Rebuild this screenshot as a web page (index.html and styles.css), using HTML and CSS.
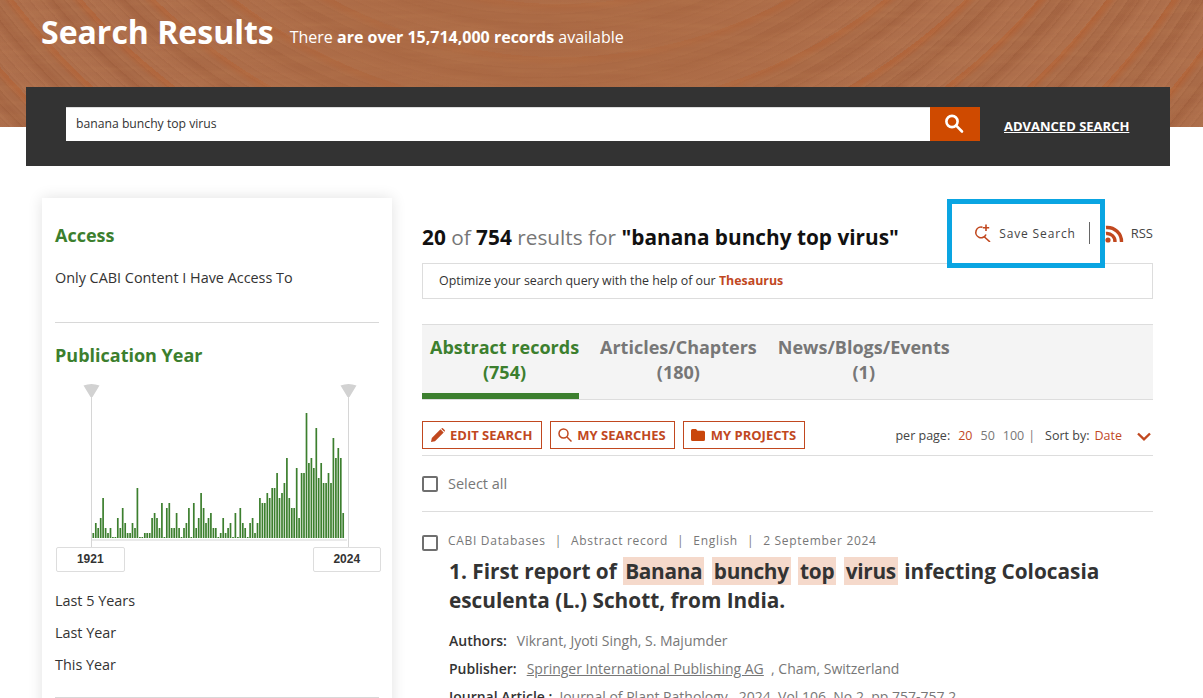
FILE: index.html
```html
<!DOCTYPE html>
<html lang="en">
<head>
<meta charset="utf-8">
<title>Search Results</title>
<link rel="stylesheet" href="styles.css">
</head>
<body>
<header class="hero">
  <svg class="grain" aria-hidden="true"><filter id="wood"><feTurbulence type="fractalNoise" baseFrequency="0.012 0.14" numOctaves="4" seed="7"/><feColorMatrix values="0 0 0 0 0.55  0 0 0 0 0.25  0 0 0 0 0.1  1.6 0 0 0 -0.62"/></filter><rect width="100%" height="100%" filter="url(#wood)"/></svg>
  <h1 class="hero-title">Search Results</h1>
  <p class="hero-sub">There <b>are over 15,714,000 records</b> available</p>
</header>
<section class="search-panel">
  <div class="search-box">
    <div class="search-input">banana bunchy top virus</div>
    <div class="search-btn"><svg width="20" height="20" viewBox="0 0 20 20" fill="none" stroke="#fff" stroke-width="2.6"><circle cx="7" cy="7.500" r="5.600"/><path d="M11.200 11.700 17 17.500" stroke-linecap="round"/></svg></div>
  </div>
  <a class="advanced">ADVANCED SEARCH</a>
</section>
<div class="content">
  <aside class="sidebar">
    <h2 class="side-title">Access</h2>
    <p class="side-item access-item">Only CABI Content I Have Access To</p>
    <hr class="side-rule">
    <h2 class="side-title pub">Publication Year</h2>
    <div class="chart">
      <svg width="325" height="167" viewBox="0 0 325 167" class="chart-svg">
        <path d="M36.5 10V167M293.5 10V167M36 160H292" stroke="#d6d6d6" stroke-width="1" fill="none"/>
        <path d="M28.5 5.500Q36.500 2.500 44.500 5.500L37.500 17H35.500ZM285.500 5.500Q293.500 2.500 301.500 5.500L294.500 17H292.500Z" fill="#d2d2d2"/>
        <path class="bars" d="M38.3 158V153M40.8 158V143M43.2 158V148M45.7 158V138M48.1 158V118M50.6 158V148M53 158V153M55.5 158V148M57.9 158V157M60.4 158V157M62.8 158V138M65.3 158V148M67.7 158V128M70.2 158V143M72.6 158V153M75.1 158V153M77.5 158V143M80 158V148M82.4 158V108M84.9 158V157M87.3 158V157M89.8 158V153M92.2 158V153M94.7 158V153M97.1 158V138M99.6 158V133M102 158V138M104.5 158V148M106.9 158V123M109.4 158V157M111.8 158V128M114.3 158V123M116.7 158V148M119.2 158V148M121.6 158V133M124.1 158V148M126.5 158V157M129 158V148M131.4 158V143M133.9 158V128M136.3 158V157M138.8 158V123M141.2 158V148M143.7 158V138M146.100 158V113M148.6 158V128M151 158V143M153.5 158V138M155.9 158V133M158.4 158V148M160.8 158V148M163.3 158V157M165.7 158V153M168.2 158V138M170.6 158V153M173.1 158V148M175.5 158V143M178 158V157M180.4 158V133M182.900 158V157M185.3 158V128M187.8 158V143M190.2 158V148M192.7 158V157M195.1 158V143M197.6 158V138M200 158V153M202.5 158V143M204.9 158V118M207.4 158V123M209.8 158V123M212.3 158V113M214.7 158V118M217.2 158V108M219.6 158V108M222.1 158V93M224.5 158V118M227 158V113M229.4 158V103M231.9 158V78M234.3 158V118M236.8 158V128M239.2 158V128M241.7 158V88M244.1 158V138M246.6 158V93M249 158V93M251.5 158V33M253.9 158V83M256.4 158V78M258.8 158V88M261.3 158V48M263.7 158V98M266.2 158V83M268.6 158V103M271.1 158V103M273.5 158V93M276 158V103M278.4 158V58M280.9 158V78M283.3 158V68M285.8 158V78M288.2 158V133"/>
      </svg>
      <div class="year-row"><span class="year">1921</span><span class="year">2024</span></div>
    </div>
    <ul class="range-list">
      <li class="side-item">Last 5 Years</li>
      <li class="side-item">Last Year</li>
      <li class="side-item">This Year</li>
    </ul>
    <hr class="side-rule bottom-rule">
  </aside>
  <main class="results">
    <div class="top-row">
      <h2 class="count"><b>20</b> of <b>754</b> results for <b>"banana bunchy top virus"</b></h2>
      <div class="top-tools">
        <a class="tool save"><svg width="17" height="18" viewBox="0 0 17 18" fill="none" stroke="#c1481f" stroke-width="1.6"><path d="M8.500 3.300A5.300 5.300 0 1 0 12 10.500"/><path d="M10.500 13 15.500 17.500" stroke-linecap="round"/><path d="M12 .5V7M8.800 3.700H15.200"/></svg><span class="save-label">Save Search</span></a>
        <span class="tool-sep"></span>
        <a class="tool rss"><svg width="20" height="19" viewBox="0 0 20 19" fill="none" stroke="#c1481f" stroke-width="3.400"><circle cx="3" cy="16" r="2.600" fill="#c1481f" stroke="none"/><path d="M1 9.500A8 8 0 0 1 10 18"/><path d="M1 3.500A14.200 14.200 0 0 1 16.500 18"/></svg><span class="rss-label">RSS</span></a>
      </div>
      <div class="callout"></div>
    </div>
    <div class="notice">Optimize your search query with the help of our <a class="link-strong">Thesaurus</a></div>
    <nav class="tabs">
      <a class="tab active">Abstract records<br>(754)</a>
      <a class="tab">Articles/Chapters<br>(180)</a>
      <a class="tab">News/Blogs/Events<br>(1)</a>
    </nav>
    <div class="actions">
      <a class="btn"><svg width="14" height="14" viewBox="0 0 14 14" fill="#c1481f"><path d="M0 14 .8 10 9.500 1.300 12.700 4.500 4 13.200ZM10.500.4Q11.300-.3 12.100.4L13.600 1.900Q14.300 2.700 13.600 3.500L13.400 3.800 10.200 .7Z"/></svg>EDIT SEARCH</a>
      <a class="btn btn-tight"><svg width="14" height="14" viewBox="0 0 14 14" fill="none" stroke="#c1481f" stroke-width="1.500"><circle cx="5.500" cy="5.500" r="4.500"/><path d="M9 9 13.500 13.500"/></svg>MY SEARCHES</a>
      <a class="btn btn-tight btn-folder"><svg width="14" height="12" viewBox="0 0 14 12" fill="#c9460b"><path d="M0 1.500Q0 0 1.500 0H5L6.500 1.700H12.500Q14 1.700 14 3.200V10.500Q14 12 12.500 12H1.500Q0 12 0 10.500Z"/></svg>MY PROJECTS</a>
      <div class="paging">
        <span>per page:</span><a class="accent">20</a><a class="muted">50</a><a class="muted">100</a><span class="bar">|</span><span>Sort by:</span><a class="accent date">Date</a>
        <svg class="chev" width="14" height="9" viewBox="0 0 14 9" fill="none" stroke="#c1481f" stroke-width="2.400"><path d="M1 1.500 7 7.300 13 1.500"/></svg>
      </div>
    </div>
    <label class="select-all"><span class="check"></span>Select all</label>
    <article class="record">
      <div class="record-meta"><span class="check"></span><span class="meta">CABI Databases</span><i>|</i><span class="meta">Abstract record</span><i>|</i><span class="meta">English</span><i>|</i><span class="meta">2 September 2024</span></div>
      <h3 class="record-title">1. First report of <mark>Banana</mark> <mark>bunchy</mark> <mark>top</mark> <mark>virus</mark> infecting Colocasia esculenta (L.) Schott, from India.</h3>
      <p class="field"><b>Authors:</b><span>Vikrant, Jyoti Singh, S. Majumder</span></p>
      <p class="field"><b>Publisher:</b><span><u>Springer International Publishing AG</u> &nbsp;, Cham, Switzerland</span></p>
      <p class="field field-tight"><b>Journal Article :</b><span>Journal of Plant Pathology , 2024, Vol.106, No.2, pp.757-757.2</span></p>
    </article>
  </main>
</div>
</body>
</html>
```
FILE: styles.css
```css
* { box-sizing: border-box; }
html, body { margin: 0; height: 698px; overflow: hidden; background: #fff; }
body { font-family: "Open Sans", sans-serif; color: #333; }
h1, h2, h3, p, ul { margin: 0; padding: 0; }
ul { list-style: none; }

.hero {
  position: relative;
  height: 127px;
  padding: 11px 41px 0;
  display: flex;
  align-items: flex-start;
  gap: 16px;
  color: #fff;
  overflow: hidden;
  background-color: #a96a47;
  background-image:
    linear-gradient(90deg, rgba(168,108,78,.1) 0 10%, rgba(172,106,68,.7) 32% 56%, rgba(172,110,74,.05) 76%),
    repeating-radial-gradient(circle at 560px -420px, rgba(190,90,36,.36) 0 3px, rgba(150,80,50,0) 9px 17px, rgba(140,70,40,.18) 21px 24px, rgba(195,130,95,.16) 33px 53px),
    repeating-radial-gradient(circle at 540px -400px, rgba(120,60,30,.1) 0 1px, rgba(0,0,0,0) 2px 6px, rgba(205,140,100,.1) 7px 9px);
}
.grain { position: absolute; inset: 0; width: 100%; height: 100%; opacity: .22; }
.hero-title { position: relative; font-size: 32px; font-weight: 700; line-height: 42px; }
.hero-sub { position: relative; margin-top: 15px; font-size: 16px; line-height: 22px; }

.search-panel {
  position: relative;
  margin: -40px 33px 0 26px;
  height: 79px;
  background: #333;
  padding: 20px 40px 0;
  display: flex;
  align-items: flex-start;
}
.search-box { display: flex; width: 914px; height: 34px; }
.search-input {
  flex: 1;
  background: #fff;
  border-top: 1px solid #ddd;
  padding: 0 10px;
  font-size: 12.2px;
  line-height: 32px;
  color: #333;
}
.search-btn { width: 50px; background: #cf4a00; display: flex; align-items: center; justify-content: center; }
.advanced { margin: 10px 0 0 24px; color: #fff; font-size: 13px; font-weight: 700; line-height: 18px; text-decoration: underline; }

.content { display: flex; align-items: flex-start; padding: 32px 50px 0 42px; gap: 30px; }
.sidebar { width: 350px; height: 520px; flex: none; padding: 25px 13px 0; background: #fff; box-shadow: 0 0 14px rgba(0,0,0,.12); }
.side-title { color: #3c7f2e; font-size: 18px; font-weight: 700; line-height: 24px; }
.side-item { font-size: 14.4px; line-height: 20px; color: #333; }
.access-item { margin-top: 21px; }
.side-rule { border: 0; border-top: 1px solid #d8d8d8; margin: 34px 0 0; }
.pub { margin-top: 20px; }
.chart { margin-top: 13px; }
.chart-svg { display: block; }
.bars { stroke: #3c7f2e; stroke-width: 1.7; fill: none; }
.year-row { display: flex; justify-content: space-between; margin-right: -2px; padding-left: 1px; }
.year {
  width: 68.5px; height: 25px;
  border: 1px solid #ddd; border-radius: 2px;
  font: 700 12px/23px "Liberation Sans", sans-serif;
  text-align: center; color: #333;
}
.range-list { margin-top: 19px; display: flex; flex-direction: column; gap: 12px; }
.bottom-rule { margin-top: 22px; }

.results { position: relative; width: 731px; flex: none; }
.top-row { height: 65px; display: flex; justify-content: space-between; align-items: flex-start; padding-top: 23px; }
.count { font-size: 20.8px; font-weight: 400; line-height: 32px; color: #777; }
.count b { color: #111; font-weight: 700; }
.top-tools { display: flex; align-items: center; height: 24px; }
.tool { display: flex; align-items: center; }
.save-label { margin-left: 8px; font-size: 12px; letter-spacing: .85px; color: #444; }
.tool-sep { width: 1px; height: 22px; background: #666; margin: 0 15px 0 13px; }
.rss-label { margin-left: 6px; font-size: 13px; color: #444; }
.callout { position: absolute; left: 525px; top: 1px; width: 158px; height: 69px; border: 5px solid #0aa5e2; }

.notice { height: 36px; border: 1px solid #ddd; padding: 0 16px; font-size: 12.4px; line-height: 33px; color: #333; }
.link-strong { color: #c1481f; font-weight: 700; }

.tabs { display: flex; gap: 21px; height: 76px; margin-top: 25px; background: #f4f4f4; border-top: 1px solid #ddd; border-bottom: 1px solid #ddd; }
.tab { padding: 10px 0 0; text-align: center; font-size: 18px; font-weight: 700; line-height: 25px; color: #777; }
.tab.active { color: #3c7f2e; padding: 10px 0 0 8px; height: 74px; border-bottom: 6px solid #3c7f2e; width: 157px; white-space: nowrap; }

.actions { display: flex; align-items: flex-start; gap: 8px; height: 56px; padding-top: 21px; border-bottom: 1px solid #ddd; }
.btn {
  display: flex; align-items: center; gap: 5px;
  height: 28px; padding: 0 9px 0 8px;
  border: 1px solid #c1481f;
  color: #c1481f;
  font-size: 13px; font-weight: 700;
  white-space: nowrap;
}
.btn-tight { padding: 0 8px 0 7px; }
.btn-folder { gap: 6px; }
.paging { margin-left: auto; display: flex; align-items: center; height: 28px; font-size: 12.5px; color: #444; }
.paging a { margin-left: 8px; }
.paging .accent { color: #c1481f; }
.paging .date { margin-left: 5px; }
.paging .muted { color: #777; }
.paging .bar { margin: 0 10px 0 4px; color: #777; }
.chev { margin: 2px 2px 0 15px; }

.select-all { display: flex; align-items: center; gap: 10px; height: 56px; border-bottom: 1px solid #ddd; font-size: 14.5px; color: #777; }
.check { display: block; flex: none; width: 16px; height: 16px; border: 2px solid #6f6f6f; border-radius: 2px; }

.record { padding-top: 17px; }
.record-meta { display: flex; align-items: center; height: 22px; font-size: 12px; letter-spacing: .7px; color: #777; }
.record-meta .check { margin: 5px 10px 0 0; }
.record-meta i { font-style: normal; margin: 0 9px; }
.record-title { margin: 6px 0 0 27px; width: 690px; font-size: 20.8px; font-weight: 700; line-height: 29px; color: #333; }
mark { background: #f5d9cb; color: inherit; padding: 0 2px; margin: 0 1px; letter-spacing: -.3px; }
.field { margin: 0 0 0 27px; font-size: 14px; line-height: 28px; color: #777; display: flex; gap: 10px; white-space: nowrap; }
.field-tight { gap: 7px; }
.field b { font-weight: 600; color: #333; }
.record-title + .field { margin-top: 12px; }
```
